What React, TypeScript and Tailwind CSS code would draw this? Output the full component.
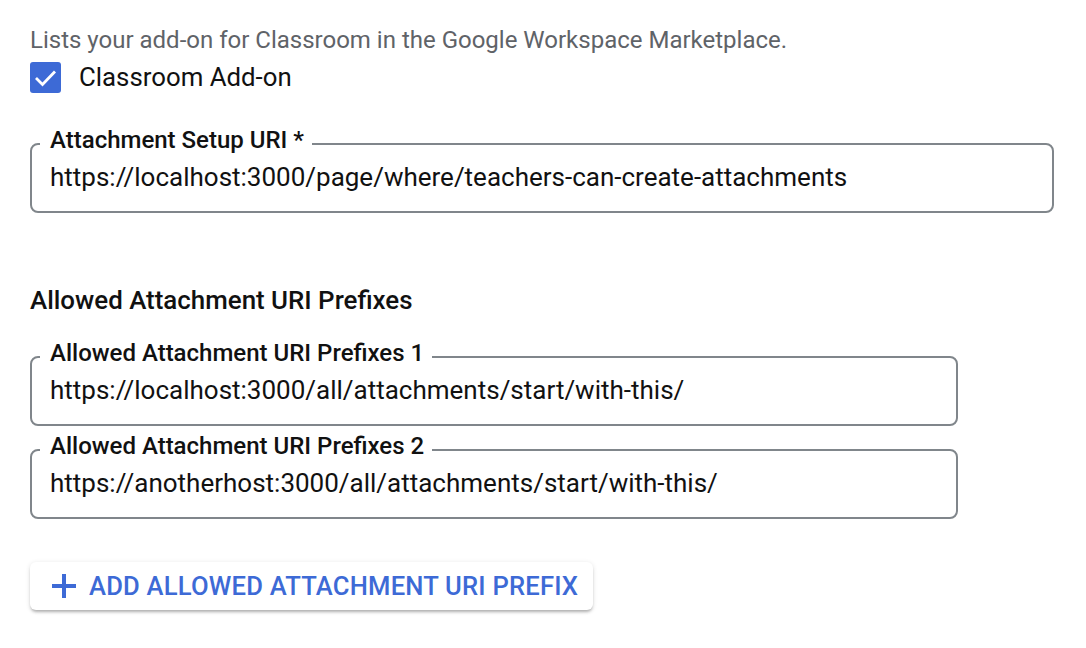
import { useState } from "react";

const font = { fontFamily: "Roboto, 'Noto Sans', sans-serif" };

function OutlinedField({ label, value, width }: { label: string; value: string; width: string }) {
  return (
    <fieldset className={`${width} border-2 border-[#80868b] rounded-[8px] px-[18px] pb-[19px]`}>
      <legend className="ml-[-10px] pl-[10px] pr-[8px] pb-[8px] text-[24px] leading-[28px] font-medium text-[#111]">
        {label}
      </legend>
      <div className="text-[26px] leading-[30px] text-[#111] whitespace-nowrap">{value}</div>
    </fieldset>
  );
}

export default function App() {
  const [checked, setChecked] = useState(true);
  const prefixes = [
    "https://localhost:3000/all/attachments/start/with-this/",
    "https://anotherhost:3000/all/attachments/start/with-this/",
  ];

  return (
    <div className="w-[1086px] h-[648px] bg-white px-[30px] pt-[26px]" style={font}>
      {/* Marketplace listing */}
      <p className="text-[24px] leading-[28px] text-[#5f6368]">
        Lists your add-on for Classroom in the Google Workspace Marketplace.
      </p>
      <label className="mt-[7px] h-[32px] flex items-center gap-[18px] cursor-pointer">
        <button
          onClick={() => setChecked(!checked)}
          className={`w-[31px] h-[31px] rounded-[3px] flex items-center justify-center ${
            checked ? "bg-[#3d6ad6]" : "border-2 border-[#5f6368] bg-white"
          }`}
        >
          {checked && (
            <svg width="31" height="31" viewBox="0 0 31 31" fill="none">
              <path d="M6 16l6.5 6.5L25 9.5" stroke="white" strokeWidth="2.8" />
            </svg>
          )}
        </button>
        <span className="text-[25.8px] leading-[32px] text-[#111]">Classroom Add-on</span>
      </label>

      {/* Setup URI */}
      <div className="mt-[33px]">
        <OutlinedField
          label="Attachment Setup URI *"
          value="https://localhost:3000/page/where/teachers-can-create-attachments"
          width="w-[1024px]"
        />
      </div>

      {/* Prefixes */}
      <h3 className="mt-[72px] text-[25.9px] leading-[30px] font-medium text-[#111]">
        Allowed Attachment URI Prefixes
      </h3>
      <div className="mt-[24px] flex flex-col gap-[6px]">
        {prefixes.map((p, i) => (
          <OutlinedField key={i} label={`Allowed Attachment URI Prefixes ${i + 1}`} value={p} width="w-[928px]" />
        ))}
      </div>

      <button className="mt-[43px] h-[48px] pl-[22px] pr-[15px] flex items-center gap-[13px] bg-white rounded-[6px] shadow-[0_3px_3px_-1px_rgba(0,0,0,0.25),0_1px_5px_0_rgba(0,0,0,0.12)]">
        <svg width="24" height="24" viewBox="0 0 24 24" fill="none">
          <path d="M12 0v24M0 12h24" stroke="#3d6ad6" strokeWidth="4" />
        </svg>
        <span className="text-[25.6px] leading-[28px] font-medium tracking-[0.2px] text-[#3d6ad6]">
          ADD ALLOWED ATTACHMENT URI PREFIX
        </span>
      </button>
    </div>
  );
}
